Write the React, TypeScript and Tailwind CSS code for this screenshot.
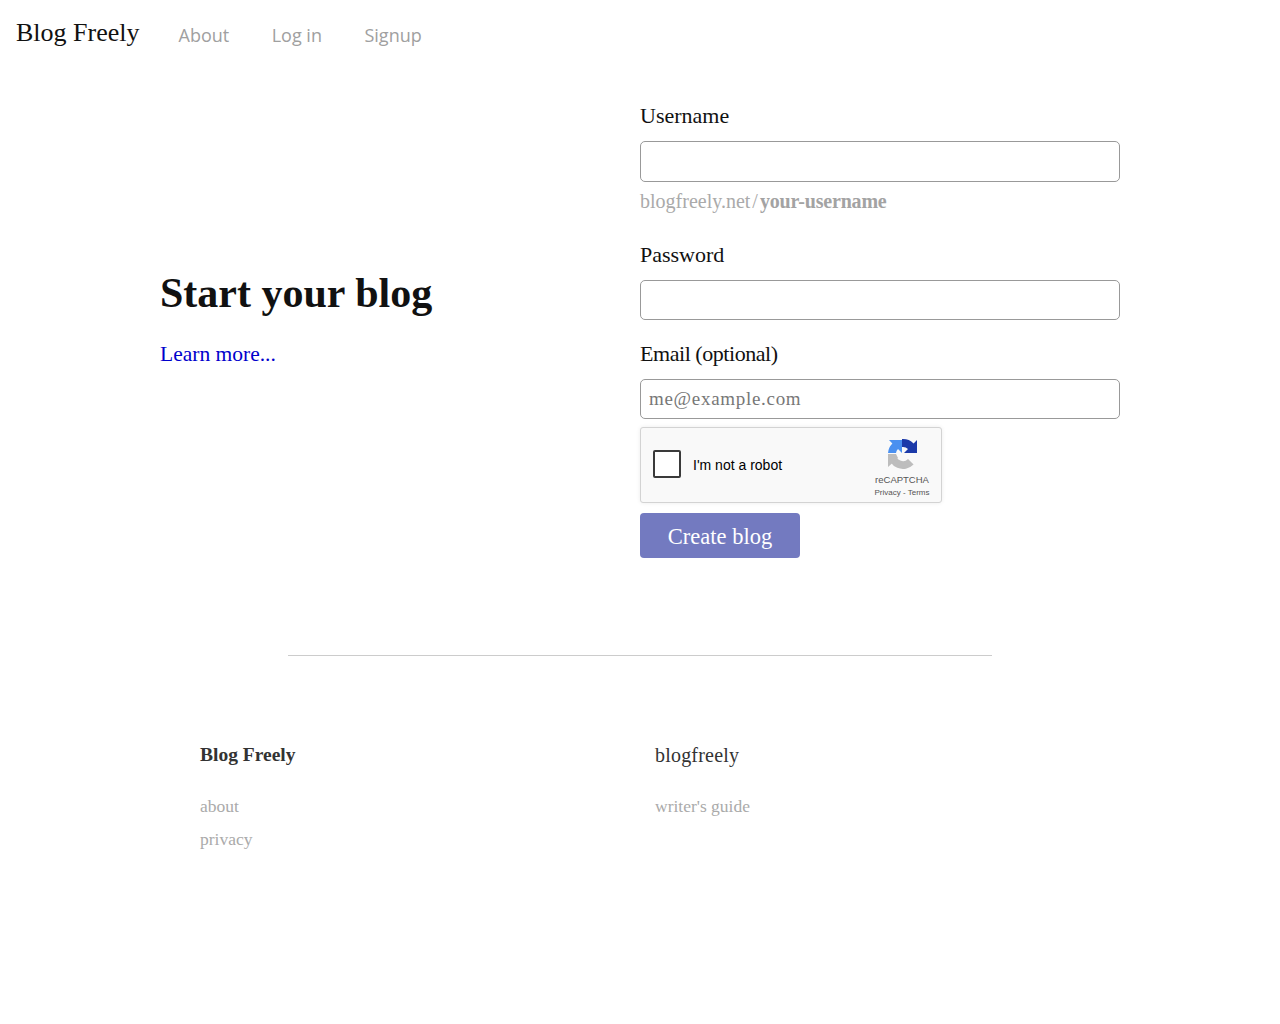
const serif = { fontFamily: '"Liberation Serif", serif' };

const RecaptchaLogo = () => (
  <svg width="32" height="32" viewBox="0 0 32 32" className="ml-[2px]">
    <path d="M1 16 H9 A7 7 0 0 0 21 21 L26.6 26.6 A15 15 0 0 1 1 16 Z" fill="#bdbdbd" />
    <path d="M1 16 V29 L5.5 25 L11 20 L9 16 Z" fill="#bdbdbd" />
    <path d="M1 15 A15 15 0 0 1 5.4 5.4 L2 2 H15 V15 L11 11 A7 7 0 0 0 9 15 Z" fill="#4a90f0" />
    <path d="M15 1 A15 15 0 0 1 26.6 5.4 L30 2 V15 H17 L21 11 A7 7 0 0 0 15 9 Z" fill="#1c3aa9" />
  </svg>
);

const Field = ({ label, placeholder, className, labelClassName, tall }: { label: string; placeholder?: string; className?: string; labelClassName?: string; tall?: boolean }) => (
  <label className={`block ${className ?? ""}`}>
    <span className={`block text-[22px] leading-[30px] text-[#111] ${labelClassName ?? ""}`} style={serif}>{label}</span>
    <input
      placeholder={placeholder}
      className={`mt-[10px] block w-full rounded-[5px] border border-[#999] bg-white px-2 text-[19px] tracking-[0.7px] placeholder:text-[#777] ${tall ? "h-[41px]" : "h-10"}`}
      style={serif}
    />
  </label>
);

export default function App() {
  return (
    <div className="min-h-[1024px] bg-white" style={serif}>
      {/* Nav */}
      <nav className="flex h-[70px] items-start pl-4 pt-[14px]">
        <span className="text-[26px] leading-[38px] text-[#111]">Blog Freely</span>
        <div className="ml-[39px] flex gap-[42.5px] pt-[6px] text-[18px] leading-[30px] text-[#a0a0a0]" style={{ fontFamily: '"Open Sans", sans-serif' }}>
          <a>About</a>
          <a>Log in</a>
          <a>Signup</a>
        </div>
      </nav>

      {/* Intro and signup form */}
      <main className="mx-auto flex w-[960px] items-center pt-[31px]">
        <div className="w-[480px] pb-[27px]">
          <h1 className="text-[42px] font-bold leading-[60px] text-[#111]">Start your blog</h1>
          <a className="mt-[16px] block text-[21.5px] leading-[30px] text-[#0000cc]">Learn more...</a>
        </div>
        <div className="w-[480px]">
          <Field label="Username" tall />
          <p className="mt-[5px] text-[20px] leading-[28px] text-[#aaa]">
            <span>blogfreely.net</span>
            <span className="mx-[2px]">/</span>
            <strong className="font-bold tracking-[-0.2px] text-[#a3a3a3]">your-username</strong>
          </p>
          <Field label="Password" className="mt-[25px]" />
          <Field label="Email (optional)" labelClassName="tracking-[-0.45px]" placeholder="me@example.com" className="mt-[19px]" />

          {/* reCAPTCHA widget */}
          <div className="mt-2 flex h-[76px] w-[302px] items-center rounded-[3px] border border-[#d3d3d3] bg-[#f9f9f9] pl-3 pr-[10px] shadow-[0_0_4px_rgba(0,0,0,0.08)]" style={{ fontFamily: '"Liberation Sans", sans-serif' }}>
            <div className="mb-[2px] h-7 w-7 rounded-[2px] border-2 border-[#3a3a3a] bg-white" />
            <span className="ml-3 flex-1 text-[14px] text-[#000]">I'm not a robot</span>
            <div className="flex w-[58px] flex-col items-center pt-[6px]">
              <RecaptchaLogo />
              <span className="mt-[4px] text-[9.5px] leading-[12px] text-[#555]">reCAPTCHA</span>
              <span className="mt-[1px] text-[8px] leading-[12px] text-[#555]">Privacy - Terms</span>
            </div>
          </div>

          <button className="mt-[10px] block h-[45px] w-40 rounded-[4px] bg-[#737ac0] pt-[2px] text-[22.5px] text-white">Create blog</button>
        </div>
      </main>

      <hr className="mx-auto mt-[97px] w-[704px] border-t border-[#ccc]" />

      {/* Footer */}
      <footer className="ml-[200px] mt-[84px] flex">
        <div className="w-[455px]">
          <h3 className="text-[19.5px] font-bold leading-[30px] text-[#333]">Blog Freely</h3>
          <div className="mt-[21px] flex flex-col gap-[3px] text-[17.5px] leading-[30px] text-[#aaa]">
            <a>about</a>
            <a>privacy</a>
          </div>
        </div>
        <div>
          <h3 className="text-[20px] leading-[30px] tracking-[0.2px] text-[#333]">blogfreely</h3>
          <div className="mt-[21px] flex flex-col gap-[3px] text-[17.5px] leading-[30px] text-[#aaa]">
            <a>writer's guide</a>
          </div>
        </div>
      </footer>
    </div>
  );
}
